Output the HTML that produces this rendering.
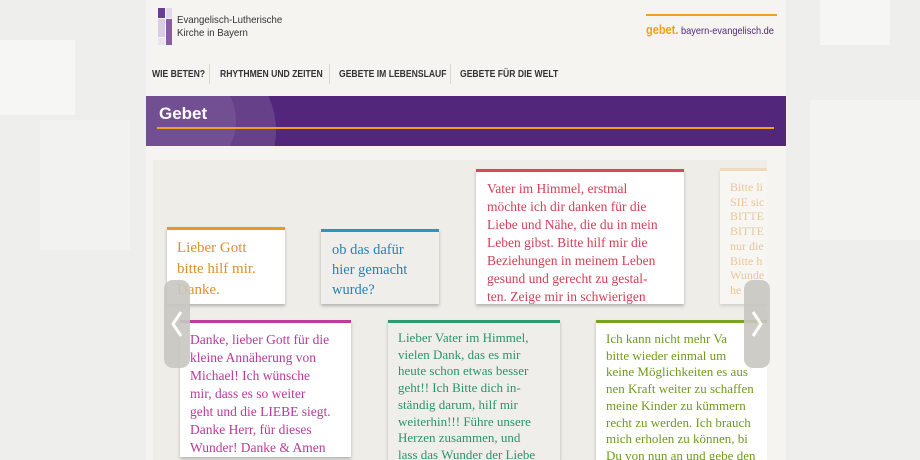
<!DOCTYPE html>
<html><head><meta charset="utf-8"><style>
*{margin:0;padding:0;box-sizing:border-box}
body{width:920px;height:460px;overflow:hidden;background:#eeeeec;font-family:"Liberation Sans",sans-serif;position:relative}
.sq{position:absolute;background:#f6f6f4}
#page{position:absolute;left:146px;top:0;width:640px;height:460px;background:#f5f4f0}
.abs{position:absolute}
.nav{position:absolute;top:68px;font-size:10px;font-weight:bold;color:#333;white-space:nowrap;transform:scaleX(0.86);transform-origin:left top}
.sep{position:absolute;top:64px;width:1px;height:20px;background:#d8d6d0}
#bar{position:absolute;left:0;top:96px;width:640px;height:50px;background:#52267a;overflow:hidden}
#slide{position:absolute;left:7px;top:160px;width:626px;height:300px;background:#efede8;overflow:hidden}
.card{position:absolute;background:#fff;box-shadow:0 2px 3px rgba(0,0,0,.25);border-top:3px solid;font-family:"Liberation Serif",serif;overflow:hidden}
.card p{position:absolute}
.arr{position:absolute;top:280px;width:26px;height:88px;background:#c9c7c2;border-radius:9px;opacity:.9}
</style></head><body>
<div class="sq" style="left:0;top:40px;width:75px;height:75px"></div>
<div class="sq" style="left:40px;top:120px;width:90px;height:130px;background:#f2f2f0"></div>
<div class="sq" style="left:820px;top:0;width:70px;height:45px"></div>
<div class="sq" style="left:810px;top:100px;width:110px;height:140px;background:#f3f3f1"></div>
<div id="page">
  <div class="abs" style="left:12px;top:8px;width:7px;height:10px;background:#6a3d8f"></div>
  <div class="abs" style="left:20px;top:8px;width:6px;height:10px;background:#e3d8ea"></div>
  <div class="abs" style="left:12px;top:19px;width:7px;height:18px;background:#d9cde3"></div>
  <div class="abs" style="left:20px;top:19px;width:6px;height:26px;background:#8a5ca6"></div>
  <div class="abs" style="left:12px;top:38px;width:7px;height:7px;background:#ebe4f0"></div>
  <div class="abs" style="left:31px;top:14px;font-size:10.5px;line-height:13px;color:#333;transform:scaleX(0.92);transform-origin:left top">Evangelisch-Lutherische<br>Kirche in Bayern</div>
  <div class="abs" style="left:500px;top:14px;width:131px;height:2px;background:#f0a020"></div>
  <div class="abs" style="left:500px;top:23px;font-size:12.5px;font-weight:bold;color:#f0a020;white-space:nowrap;transform:scaleX(0.88);transform-origin:left top">gebet.<span style="font-size:10.5px;font-weight:normal;color:#52267a"> bayern-evangelisch.de</span></div>
  <div class="nav" style="left:6px;top:69px">WIE BETEN?</div>
  <div class="sep" style="left:63px"></div>
  <div class="nav" style="left:74px;top:69px">RHYTHMEN UND ZEITEN</div>
  <div class="sep" style="left:183px"></div>
  <div class="nav" style="left:193px;top:69px">GEBETE IM LEBENSLAUF</div>
  <div class="sep" style="left:304px"></div>
  <div class="nav" style="left:314px;top:69px">GEBETE FÜR DIE WELT</div>
  <div id="bar">
    <div class="abs" style="left:-40px;top:-50px;width:170px;height:170px;border-radius:50%;background:rgba(255,255,255,.12)"></div>
    <div class="abs" style="left:-20px;top:-30px;width:110px;height:110px;border-radius:50%;background:rgba(255,255,255,.08)"></div>
    <div class="abs" style="left:13px;top:8px;font-size:17px;font-weight:bold;color:#fff">Gebet</div>
    <div class="abs" style="left:11px;top:31px;width:617px;height:2px;background:#f0a020"></div>
  </div>
  <div id="slide"></div>
</div>
<div class="card" style="left:167px;top:227px;width:118px;height:77px;border-color:#e8962a"><p style="left:10px;top:8px;font-size:15px;line-height:21px;color:#e08f2c">Lieber Gott<br>bitte hilf mir.<br>Danke.</p></div>
<div class="card" style="left:321px;top:229px;width:118px;height:75px;border-color:#2a94c8;background:#efeeeb"><p style="left:11px;top:8px;font-size:14.5px;line-height:20px;color:#2383b8">ob das dafür<br>hier gemacht<br>wurde?</p></div>
<div class="card" style="left:476px;top:169px;width:208px;height:135px;border-color:#d9475b"><p style="left:11px;top:8px;font-size:13.5px;line-height:18px;color:#d23f55;white-space:nowrap">Vater im Himmel, erstmal<br>möchte ich dir danken für die<br>Liebe und Nähe, die du in mein<br>Leben gibst. Bitte hilf mir die<br>Beziehungen in meinem Leben<br>gesund und gerecht zu gestal-<br>ten. Zeige mir in schwierigen</p></div>
<div class="card" style="left:720px;top:168px;width:60px;height:136px;border-color:#f0c890;opacity:.5"><p style="left:10px;top:9px;font-size:12px;line-height:14.7px;color:#e0a050;white-space:nowrap">Bitte li<br>SIE sic<br>BITTE<br>BITTE<br>nur die<br>Bitte h<br>Wunde<br>he</p></div>
<div class="card" style="left:180px;top:320px;width:171px;height:137px;border-color:#c0399c"><p style="left:10px;top:8px;font-size:13.5px;line-height:18px;color:#b93a98;white-space:nowrap">Danke, lieber Gott für die<br>kleine Annäherung von<br>Michael! Ich wünsche<br>mir, dass es so weiter<br>geht und die LIEBE siegt.<br>Danke Herr, für dieses<br>Wunder! Danke &amp; Amen</p></div>
<div class="card" style="left:388px;top:320px;width:172px;height:140px;border-color:#2e9a72;background:#efeeeb"><p style="left:10px;top:7px;font-size:13px;line-height:16.7px;color:#2a946c;white-space:nowrap">Lieber Vater im Himmel,<br>vielen Dank, das es mir<br>heute schon etwas besser<br>geht!! Ich Bitte dich in-<br>ständig darum, hilf mir<br>weiterhin!!! Führe unsere<br>Herzen zusammen, und<br>lass das Wunder der Liebe</p></div>
<div class="card" style="left:596px;top:320px;width:184px;height:140px;border-color:#78a41e"><p style="left:10px;top:8px;font-size:13px;line-height:16.7px;color:#6f9a1c;white-space:nowrap">Ich kann nicht mehr Va<br>bitte wieder einmal um<br>keine Möglichkeiten es aus<br>nen Kraft weiter zu schaffen<br>meine Kinder zu kümmern<br>recht zu werden. Ich brauch<br>mich erholen zu können, bi<br>Du von nun an und gebe den</p></div>
<div class="abs" style="left:767px;top:160px;width:19px;height:300px;background:#f5f4f0"></div>
<div class="arr" style="left:164px"><svg width="26" height="88"><path d="M17 32 L9 44 L17 56" stroke="#fff" stroke-width="3" fill="none"/></svg></div>
<div class="arr" style="left:744px"><svg width="26" height="88"><path d="M9 32 L17 44 L9 56" stroke="#fff" stroke-width="3" fill="none"/></svg></div>
</body></html>
